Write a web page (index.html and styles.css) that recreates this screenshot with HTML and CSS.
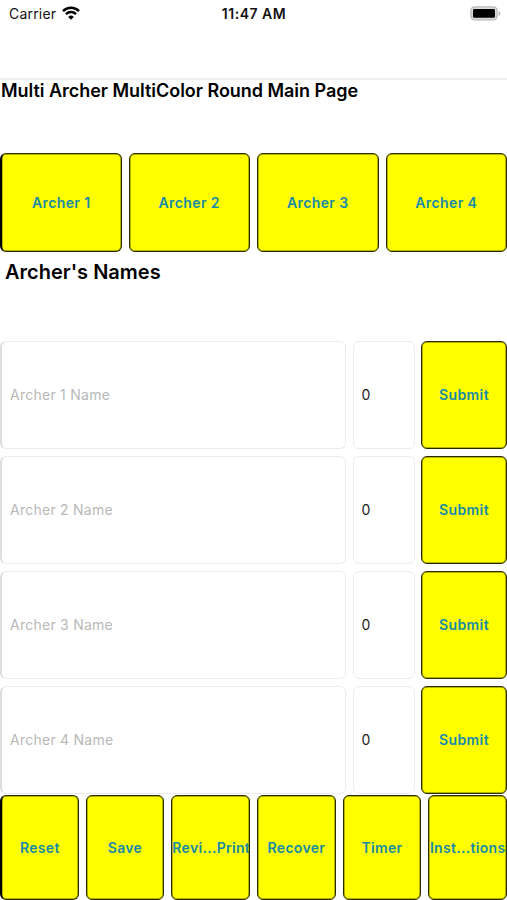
FILE: index.html
```html
<!DOCTYPE html>
<html lang="en">
<head>
  <meta charset="UTF-8">
  <title>Multi Archer MultiColor Round</title>
  <link rel="stylesheet" href="styles.css">
</head>
<body>
  <!-- Status bar -->
  <div class="status-bar">
    <div class="carrier">
      <span>Carrier</span>
      <svg class="wifi" width="18" height="14" viewBox="0 0 18 14">
        <path d="M1 5.1a11.3 11.3 0 0 1 16 0" fill="none" stroke="#000" stroke-width="2.5"/>
        <path d="M3.9 8.1a7.2 7.2 0 0 1 10.2 0" fill="none" stroke="#000" stroke-width="2.3"/>
        <path d="M9 13.7L6.2 10.9a4 4 0 0 1 5.6 0z" fill="#000"/>
      </svg>
    </div>
    <div class="time">11:47 AM</div>
    <svg class="battery" width="31" height="15" viewBox="0 0 31 15">
      <rect x="0.9" y="0.9" width="26.2" height="13" rx="3.8" fill="#ddd" stroke="#b9b9b9" stroke-width="1.3"/>
      <rect x="3" y="3" width="22" height="8.8" rx="1.2" fill="#000"/>
      <path d="M28.5 5v5q2-.7 2-2.5t-2-2.5z" fill="#b9b9b9"/>
    </svg>
  </div>

  <div class="nav-bar"></div>

  <h1 class="page-title">Multi Archer MultiColor Round Main Page</h1>

  <!-- Archers -->
  <div class="archers">
    <button class="btn">Archer 1</button>
    <button class="btn">Archer 2</button>
    <button class="btn">Archer 3</button>
    <button class="btn">Archer 4</button>
  </div>

  <h2 class="names-title">Archer's Names</h2>

  <!-- Names -->
  <div class="names">
    <div class="name-row">
      <input class="field" type="text" placeholder="Archer 1 Name">
      <input class="field score" type="text" value="0">
      <button class="btn">Submit</button>
    </div>
    <div class="name-row">
      <input class="field" type="text" placeholder="Archer 2 Name">
      <input class="field score" type="text" value="0">
      <button class="btn">Submit</button>
    </div>
    <div class="name-row">
      <input class="field" type="text" placeholder="Archer 3 Name">
      <input class="field score" type="text" value="0">
      <button class="btn">Submit</button>
    </div>
    <div class="name-row">
      <input class="field" type="text" placeholder="Archer 4 Name">
      <input class="field score" type="text" value="0">
      <button class="btn">Submit</button>
    </div>
  </div>

  <!-- Actions -->
  <div class="actions">
    <button class="btn">Reset</button>
    <button class="btn">Save</button>
    <button class="btn">Revi...Print</button>
    <button class="btn">Recover</button>
    <button class="btn">Timer</button>
    <button class="btn">Inst...tions</button>
  </div>
</body>
</html>
```

FILE: styles.css
```css
* {
  box-sizing: border-box;
}

body {
  margin: 0;
  height: 900px;
  overflow: hidden;
  background-color: #fff;
  color: #111;
  font-family: Inter, "Liberation Sans", sans-serif;
  font-size: 14px;
  display: flex;
  flex-direction: column;
}

/* Status bar */
.status-bar {
  display: grid;
  grid-template-columns: 1fr auto 1fr;
  align-items: center;
  height: 27px;
  padding: 0 6px 0 9px;
}

.carrier {
  display: flex;
  align-items: center;
  gap: 6px;
  letter-spacing: 0.2px;
}

.wifi {
  margin-top: -1px;
}

.time {
  margin-right: 2px;
  font-weight: 600;
  letter-spacing: 0.5px;
}

.battery {
  justify-self: end;
  margin-top: -1px;
}

.nav-bar {
  height: 53px;
  border-bottom: 2px solid #eee;
}

.page-title {
  margin: 0;
  height: 73px;
  padding-left: 1px;
  color: #000;
  font-size: 18px;
  font-weight: 600;
  line-height: 21px;
  letter-spacing: -0.03px;
}

.names-title {
  margin: 0;
  height: 89px;
  padding: 8px 0 0 5px;
  color: #000;
  font-size: 20px;
  font-weight: 600;
  line-height: 24px;
}

/* Buttons */
.btn {
  min-width: 0;
  padding: 0 0 1px;
  border: 1px solid #2b2b00;
  border-radius: 6px;
  box-shadow: inset 0 0 0 0.5px #6b6b00;
  background-color: #ff0;
  color: #168aa8;
  font-family: inherit;
  font-size: 14px;
  font-weight: 600;
  letter-spacing: 0.4px;
  white-space: nowrap;
}

.archers {
  display: grid;
  grid-template-columns: repeat(4, 1fr);
  gap: 7px;
  height: 99px;
}

.archers .btn:first-child,
.actions .btn:first-child {
  border-left: 2px solid #000;
}

/* Name rows */
.names {
  display: flex;
  flex-direction: column;
  gap: 7px;
}

.name-row {
  display: grid;
  grid-template-columns: 346px 62px 86px;
  justify-content: space-between;
  height: 108px;
}

.name-row .btn {
  padding-bottom: 2px;
}

.field {
  min-width: 0;
  padding: 0 8px 2px;
  border: 1px solid #ececec;
  border-radius: 6px;
  background-color: #fff;
  color: #222;
  font-family: inherit;
  font-size: 14px;
  letter-spacing: 0.25px;
}

.field:first-child {
  border-left: 2px solid #dedede;
}

.field::placeholder {
  color: #b8b8b8;
}

.actions {
  display: grid;
  grid-template-columns: repeat(6, 1fr);
  gap: 7px;
  height: 105px;
  margin-top: 1px;
}

.actions .btn {
  padding: 0 0 1px;
  letter-spacing: 0.3px;
}
```
